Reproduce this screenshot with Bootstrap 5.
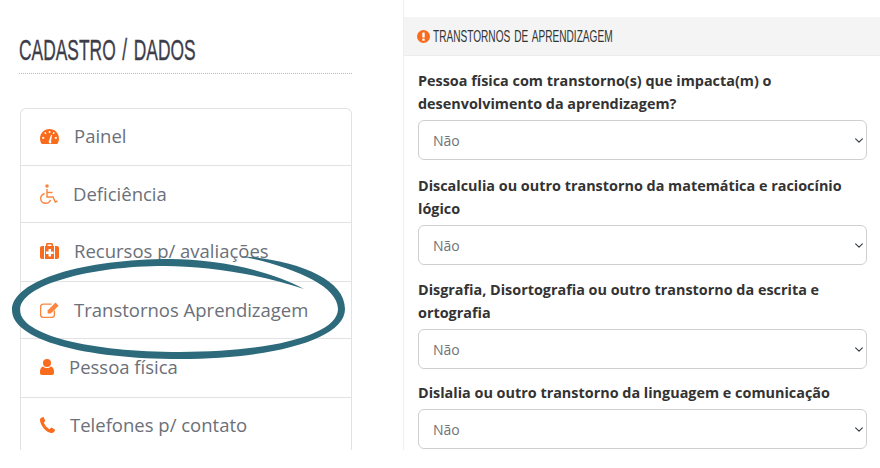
<!DOCTYPE html>
<html lang="pt-BR">
<head>
<meta charset="utf-8">
<title>Cadastro / Dados</title>
<link href="https://cdn.jsdelivr.net/npm/bootstrap@5.3.0/dist/css/bootstrap.min.css" rel="stylesheet">
<style>
html,body{background:#fff;overflow:hidden}
body{font-family:"Open Sans",sans-serif;height:468px}
.sheet{height:450px;overflow:hidden;position:relative}
.side{width:333px;margin-left:19px;margin-right:51px;flex:none}
.side-title{font-family:"Liberation Sans",sans-serif;font-size:29px;line-height:30px;font-weight:400;color:#3d3d4a;margin:35px 0 0;border-bottom:1px dotted #bbb;height:39px;white-space:nowrap}
.side-title span{display:inline-block;transform:scaleX(.6);transform-origin:left center;word-spacing:3px;-webkit-text-stroke:.35px #3d3d4a}
.side-list{margin:34px 0 0 1px}
.side-list .list-group-item{display:flex;align-items:center;gap:15px;padding:0 0 2px 19px;height:57px;color:#6b7079;font-size:18.5px;border-color:#e2e2e2;border-width:1px 1px 0;border-style:solid}
.side-list .tall-row{height:59px;padding-bottom:3px}
.side-list .low-row{padding-bottom:0}
.side-list svg{fill:#f96b1d;flex:none}
.side-list .line-icon{fill:none;stroke:#f9853f;stroke-width:1.4}
.side-list .line-icon .solid-part{fill:#f9853f;stroke:none}
.main-col{flex:1;border-left:1px solid #f0f0f0}
.panel-head{margin-top:17px;height:39px;background:#f4f4f4;border-bottom:1px solid #ececec;padding-left:13px;display:flex;align-items:center;gap:3px;font-family:"Liberation Sans",sans-serif;font-size:16.5px;color:#333;white-space:nowrap;overflow:hidden}
.panel-head span{display:inline-block;transform:scaleX(.612);transform-origin:left center;text-transform:uppercase;word-spacing:2px}
.panel-body-area{padding:13px 13px 0 14px}
.q-label{display:block;font-weight:700;font-size:14.4px;line-height:23px;color:#333;margin:0 0 5px}
.q-select{height:40px;font-size:14px;color:#6f7378;padding:0 14px;border-color:#cfcfcf;background-position:right 1px center;background-size:12px 9px;margin-bottom:14px;font-family:"Open Sans",sans-serif}
.q-select.q-snug{margin-bottom:13px}
.q-select.q-tight{margin-bottom:12px}
.swoosh{position:absolute;left:0;top:0;pointer-events:none}
</style>
</head>
<body>
<div class="sheet d-flex">
  <div class="side">
    <h2 class="side-title"><span>CADASTRO / DADOS</span></h2>
    <div class="list-group side-list">
      <a class="list-group-item list-group-item-action" href="#">
        <svg width="19" height="15" viewBox="0 0 19 15"><path fill-rule="evenodd" d="M9.500 0C4.200 0 0 4.200 0 9.500c0 2 .6 3.900 1.700 5.500h15.600c1.100-1.600 1.700-3.500 1.700-5.500C19 4.200 14.800 0 9.500 0zM8.800 2h1.500v2H8.800zM4.200 3.800l1.300-.8 1 1.500-1.300.8zM12.500 4.500l1-1.500 1.300.8-1 1.500zM2.200 8h2v1.700h-2zM14.800 8h2v1.700h-2zM8.700 12.800c0-.5.100-.8.300-1L11 6l1 .3-1 6c.2.300.4.600.4.900 0 .7-.6 1.300-1.300 1.300-.8 0-1.400-.7-1.400-1.700z"/></svg>
        <span>Painel</span>
      </a>
      <a class="list-group-item list-group-item-action low-row" href="#">
        <svg class="line-icon" width="18" height="20" viewBox="0 0 18 20"><circle class="solid-part" cx="7" cy="2" r="1.800"/><path d="M7 5v8h6l2.300 5 2.200-1M7 8.500h5.500M4.600 9.500C2.300 10.300.7 12.300.7 14.500c0 2.700 2.200 4.800 5 4.800 2.200 0 4-1.300 4.800-3.300"/></svg>
        <span>Deficiência</span>
      </a>
      <a class="list-group-item list-group-item-action tall-row" href="#">
        <svg width="19" height="16" viewBox="0 0 19 16"><path fill-rule="evenodd" d="M6 3V1.400C6 .6 6.600 0 7.400 0h4.200c.8 0 1.400.6 1.400 1.400V3h1v13H5V3zM7.500 1.500V3h4V1.500zM8.500 6v2.500H6V11h2.500v2.500H11V11h2.500V8.500H11V6z"/><path d="M0 5c0-1.100.9-2 2-2h2v13H2c-1.100 0-2-.9-2-2zM15 3h2c1.100 0 2 .9 2 2v9c0 1.100-.9 2-2 2h-2z"/></svg>
        <span>Recursos p/ avaliações</span>
      </a>
      <a class="list-group-item list-group-item-action low-row" href="#">
        <svg class="line-icon" width="19" height="16" viewBox="0 0 19 16"><path d="M11.500 2.100H3.300C1.800 2.100.6 3.300.6 4.800v7.900c0 1.500 1.200 2.700 2.700 2.700h8.400c1.500 0 2.700-1.200 2.700-2.700V8.500"/><path class="solid-part" d="M15.500.6 18.600 3.700 10.800 11.500H7.600V8.400z"/></svg>
        <span>Transtornos Aprendizagem</span>
      </a>
      <a class="list-group-item list-group-item-action tall-row" href="#">
        <svg width="14" height="16" viewBox="0 0 14 16"><circle cx="7" cy="4" r="4"/><path d="M3.200 7.500C4.200 8.500 5.500 9 7 9s2.800-.5 3.800-1.500C12.800 8 14 9.800 14 12.500V14c0 1.200-.8 2-2 2H2c-1.200 0-2-.8-2-2v-1.500C0 9.800 1.200 8 3.200 7.500z"/></svg>
        <span>Pessoa física</span>
      </a>
      <a class="list-group-item list-group-item-action" href="#">
        <svg width="15" height="16" viewBox="0 0 15 16"><path d="M3.300 0 1.200.8C.4 1.200 0 2 0 3.200 0 5.500 1.500 8.500 3.500 11c2.200 2.800 5 5 7.700 5 1.200 0 2.200-.5 3-1.300.5-.6.800-1.200.8-1.700l-.2-.4-3.300-2-.6.100-1.300 1.500c-1.500-.4-3.300-2.200-4.500-4.100C4.400 6.800 4 6 3.800 5.300l1.500-1-.1-.6L3.700.2z"/></svg>
        <span>Telefones p/ contato</span>
      </a>
    </div>
  </div>
  <div class="main-col">
    <div class="panel-head">
      <svg width="13" height="13" viewBox="0 0 13 13"><circle cx="6.500" cy="6.500" r="6.500" fill="#f96b1d"/><rect x="5.300" y="2.500" width="2.400" height="5" rx=".6" fill="#fff"/><rect x="5.300" y="8.500" width="2.400" height="2.200" rx=".5" fill="#fff"/></svg>
      <span>Transtornos de aprendizagem</span>
    </div>
    <form class="panel-body-area">
      <label class="q-label">Pessoa física com transtorno(s) que impacta(m) o desenvolvimento da aprendizagem?</label>
      <select class="form-select q-select"><option>Não</option></select>
      <label class="q-label">Discalculia ou outro transtorno da matemática e raciocínio lógico</label>
      <select class="form-select q-select q-snug"><option>Não</option></select>
      <label class="q-label">Disgrafia, Disortografia ou outro transtorno da escrita e ortografia</label>
      <select class="form-select q-select q-tight"><option>Não</option></select>
      <label class="q-label">Dislalia ou outro transtorno da linguagem e comunicação</label>
      <select class="form-select q-select"><option>Não</option></select>
    </form>
  </div>
  <svg class="swoosh" width="880" height="450" viewBox="0 0 880 450"><path fill="#2d6a7c" d="M304 289C260 274 205 266 165 266C90 266 20 285 20 310C20 335 90 352 180 352C270 352 338 335 338 309C338 285 290 266 240 256C295 260 345 278 345 309C345 340 270 359 180 359C85 359 12 340 12 310C12 280 85 259 170 259C215 259 270 270 304 289Z"/></svg>
</div>
<script src="https://cdn.jsdelivr.net/npm/bootstrap@5.3.0/dist/js/bootstrap.bundle.min.js"></script>
</body>
</html>
